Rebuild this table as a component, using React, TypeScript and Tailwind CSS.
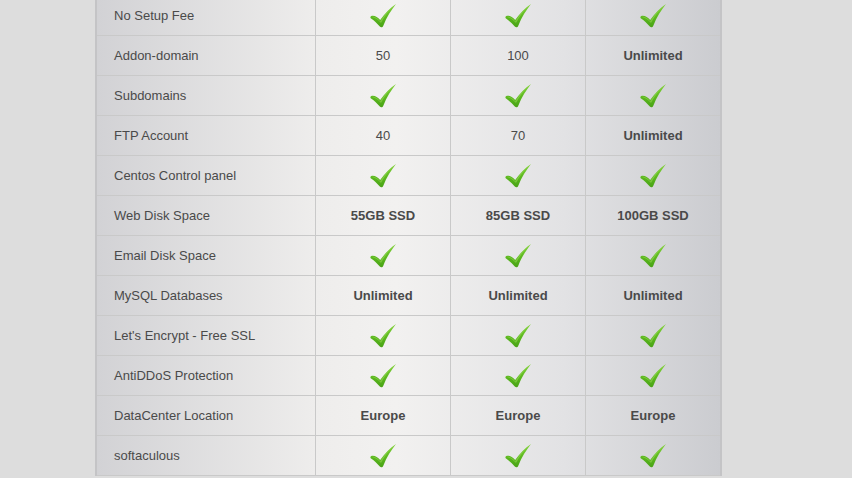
const rows: { label: string; values: (string | null)[] }[] = [
  { label: 'No Setup Fee', values: [null, null, null] },
  { label: 'Addon-domain', values: ['50', '100', 'Unlimited'] },
  { label: 'Subdomains', values: [null, null, null] },
  { label: 'FTP Account', values: ['40', '70', 'Unlimited'] },
  { label: 'Centos Control panel', values: [null, null, null] },
  { label: 'Web Disk Space', values: ['55GB SSD', '85GB SSD', '100GB SSD'] },
  { label: 'Email Disk Space', values: [null, null, null] },
  { label: 'MySQL Databases', values: ['Unlimited', 'Unlimited', 'Unlimited'] },
  { label: "Let's Encrypt - Free SSL", values: [null, null, null] },
  { label: 'AntiDDoS Protection', values: [null, null, null] },
  { label: 'DataCenter Location', values: ['Europe', 'Europe', 'Europe'] },
  { label: 'softaculous', values: [null, null, null] },
];

function Check() {
  return (
    <svg width="28" height="26" viewBox="0 0 28 26">
      <defs>
        <linearGradient id="ck" x1="0" y1="0" x2="0" y2="1">
          <stop offset="0" stopColor="#86d43e" />
          <stop offset="0.55" stopColor="#5cb81f" />
          <stop offset="1" stopColor="#49a316" />
        </linearGradient>
      </defs>
      <path
        d="M2 13.2 C5 12 8.5 14 11.2 17 C16 10.5 21 5 27 1 C22.5 7 17.5 14 14.3 22.8 C13.6 24.6 11.9 24.8 10.8 23.6 C8 20.3 5 17.5 2 15.6 C1.2 15 1.2 13.6 2 13.2 Z"
        fill="url(#ck)"
      />
      <path
        d="M3 13.9 C5.5 13.3 8.5 15 11.1 18.2 C15.5 11.5 20 6.5 25 2.6 C20 7.5 15.5 13.5 12 20 C9 16.5 6 14.8 3 13.9 Z"
        fill="#9fe05e"
        opacity="0.5"
      />
    </svg>
  );
}

function isNumeric(v: string) {
  return /^\d+$/.test(v);
}

export default function App() {
  return (
    <div className="h-screen w-full overflow-hidden bg-[#dddddd] font-['Liberation_Sans',Arial,sans-serif] text-[13px] text-[#4a4a4a]">
      <div className="mx-[95px] -mt-[4px] w-[627px] border-x-2 border-[#c4c4c6] bg-[linear-gradient(90deg,#d2d2d5_0%,#eeedec_35%,#f2f1f0_48%,#e2e2e4_75%,#cbccd0_100%)]">
        {rows.map((r) => (
          <div key={r.label} className="grid h-[40px] grid-cols-[218px_135px_135px_135px] border-b border-[#c9c9c9]">
            <div className="flex items-center pl-[17px]">{r.label}</div>
            {r.values.map((v, i) => (
              <div key={i} className="flex items-center justify-center border-l border-[#c9c9c9]">
                {v === null ? (
                  <Check />
                ) : (
                  <span className={isNumeric(v) ? '' : 'font-bold'}>{v}</span>
                )}
              </div>
            ))}
          </div>
        ))}
      </div>
    </div>
  );
}
